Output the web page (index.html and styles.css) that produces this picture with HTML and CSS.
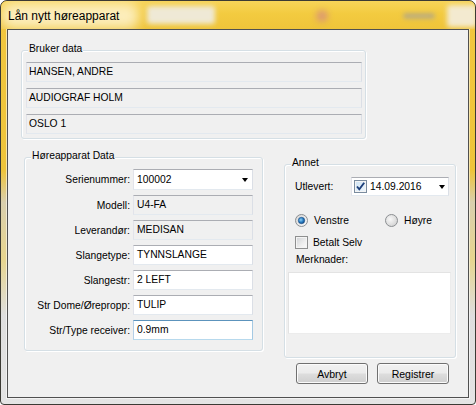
FILE: index.html
```
<!DOCTYPE html>
<html>
<head>
<meta charset="utf-8">
<link rel="stylesheet" href="styles.css">
</head>
<body>
<div class="window">
  <div class="titlebar">
    <span class="glow"></span>
    <span class="bg-blob blob-box"></span>
    <span class="bg-blob blob-red"></span>
    <span class="bg-blob blob-text"></span>
    <span class="bg-blob blob-white"></span>
    <span class="title">Lån nytt høreapparat</span>
  </div>
  <div class="client">
    <div class="group bruker">
      <span class="legend">Bruker data</span>
      <div class="tb ro wide">HANSEN, ANDRE</div>
      <div class="tb ro wide">AUDIOGRAF HOLM</div>
      <div class="tb ro wide">OSLO 1</div>
    </div>
    <div class="lower">
      <div class="group hore">
        <span class="legend">Høreapparat Data</span>
        <div class="form">
          <span class="lbl">Serienummer:</span>
          <div class="tb combo">100002<span class="arrow"></span></div>
          <span class="lbl">Modell:</span>
          <div class="tb ro">U4-FA</div>
          <span class="lbl">Leverandør:</span>
          <div class="tb ro">MEDISAN</div>
          <span class="lbl">Slangetype:</span>
          <div class="tb">TYNNSLANGE</div>
          <span class="lbl">Slangestr:</span>
          <div class="tb">2 LEFT</div>
          <span class="lbl">Str Dome/Ørepropp:</span>
          <div class="tb">TULIP</div>
          <span class="lbl">Str/Type receiver:</span>
          <div class="tb focus">0.9mm</div>
        </div>
      </div>
      <div class="right">
        <div class="group annet">
          <span class="legend">Annet</span>
          <div class="date-row">
            <span class="date-lbl">Utlevert:</span>
            <div class="tb date">
              <span class="chk checked"><svg width="11" height="11" viewBox="0 0 11 11"><path d="M2 5.5 L4.3 8.3 L9.2 1.8" fill="none" stroke="#1d3f7a" stroke-width="1.9"/></svg></span>
              <span class="date-text">14.09.2016</span>
              <span class="arrow"></span>
            </div>
          </div>
          <div class="radio-row">
            <span class="opt venstre"><svg class="radio" width="13" height="13" viewBox="0 0 13 13"><defs><radialGradient id="rg" cx="0.4" cy="0.4" r="0.6"><stop offset="0" stop-color="#8fd0f5"/><stop offset="0.6" stop-color="#2a7fc4"/><stop offset="1" stop-color="#124e8c"/></radialGradient><linearGradient id="ring" x1="0" y1="0" x2="1" y2="1"><stop offset="0" stop-color="#d4d4d4"/><stop offset="1" stop-color="#fbfbfb"/></linearGradient></defs><circle cx="6.5" cy="6.5" r="6" fill="url(#ring)" stroke="#8c8f92"/><circle cx="6.5" cy="6.5" r="3.2" fill="url(#rg)" stroke="#1c4e85" stroke-width="0.6"/></svg>Venstre</span>
            <span class="opt"><svg class="radio" width="13" height="13" viewBox="0 0 13 13"><defs><radialGradient id="rg2" cx="0.4" cy="0.4" r="0.7"><stop offset="0" stop-color="#f8f8f8"/><stop offset="1" stop-color="#cfcfcf"/></radialGradient></defs><circle cx="6.5" cy="6.5" r="6" fill="url(#rg2)" stroke="#8c8f92"/></svg>Høyre</span>
          </div>
          <div class="check-row"><span class="chk"></span>Betalt Selv</div>
          <div class="merk-lbl">Merknader:</div>
          <div class="memo"></div>
        </div>
        <div class="buttons">
          <button class="btn">Avbryt</button>
          <button class="btn">Registrer</button>
        </div>
      </div>
    </div>
  </div>
</div>
</body>
</html>
```
FILE: styles.css
```
* { box-sizing: border-box; }
html, body { margin: 0; padding: 0; background: #ffffff; }
body {
  font-family: "Liberation Sans", Arial, sans-serif;
  font-size: 10.3px;
  color: #000;
}
.window {
  width: 476px;
  height: 405px;
  border: 1px solid #3b3a34;
  border-radius: 7px 7px 4px 4px;
  padding: 0 6px 6px 6px;
  background: linear-gradient(180deg, #f2c73f 0%, #eec43a 42%, #d9cfae 50%, #e7d58e 64%, #dedede 78%, #e4e4e4 100%);
  overflow: hidden;
}
.titlebar {
  position: relative;
  height: 28px;
  margin: 0 -6px;
  padding-left: 7px;
  display: flex;
  align-items: center;
  background: linear-gradient(180deg, #f7d459 0%, #f3cb40 45%, #efc43a 100%);
  border-radius: 6px 6px 0 0;
  overflow: hidden;
}
.title {
  position: relative;
  font-size: 12px;
  color: #000;
  margin-top: 2px;
}
.glow {
  position: absolute;
  left: 0; top: 2px;
  width: 138px; height: 26px;
  background: rgba(255, 250, 230, 0.75);
  filter: blur(6px);
  border-radius: 10px;
}
.bg-blob { position: absolute; filter: blur(2.5px); border-radius: 3px; }
.blob-box { left: 146px; top: 5px; width: 68px; height: 18px; background: #efe9d6; }
.blob-red { left: 315px; top: 9px; width: 12px; height: 12px; background: #dc9a70; border-radius: 50%; filter: blur(3px); }
.blob-text { left: 402px; top: 12px; width: 32px; height: 6px; background: #bfae78; filter: blur(2px); }
.blob-white { left: 446px; top: 4px; width: 30px; height: 22px; background: #f3ead0; }

.client {
  height: 369px;
  background: #f0f0f0;
  border: 1px solid #505050;
  box-shadow: 0 0 0 1px rgba(255,255,255,0.55);
}
.group {
  position: relative;
  border: 1px solid #d5dfe5;
  border-radius: 3px;
  box-shadow: inset 1px 1px 0 #fff, 1px 1px 0 #fff;
}
.legend {
  position: absolute;
  top: -8px;
  left: 6px;
  padding: 0 1px;
  line-height: 12px;
  background: #f0f0f0;
  white-space: nowrap;
}
.bruker {
  margin: 20px 0 0 13px;
  width: 345px;
  height: 89px;
  padding: 11px 0 0 4px;
  display: flex;
  flex-direction: column;
  gap: 6px;
}
.tb {
  height: 20px;
  border: 1px solid;
  border-color: #abadb3 #dbdfe6 #e3e9ef #e2e3ea;
  background: #fff;
  padding-left: 3px;
  line-height: 18px;
  white-space: nowrap;
}
.tb.ro { background: #f0f0f0; }
.wide { width: 336px; padding-left: 2px; }
.tb.focus { border-color: #5c93bc #a4c9e3 #b7d9ed #b5cfe7; }

.lower {
  display: flex;
  align-items: flex-start;
  margin-top: 18px;
}
.hore {
  margin-left: 16px;
  width: 239px;
  height: 194px;
  padding-top: 11px;
}
.form {
  display: grid;
  grid-template-columns: 105px 120px;
  grid-template-rows: 21px;
  grid-auto-rows: 20px;
  column-gap: 3px;
  row-gap: 5px;
}
.lbl {
  text-align: right;
  align-self: center;
  white-space: nowrap;
}
.combo {
  height: 21px;
  line-height: 19px;
  display: flex;
  justify-content: space-between;
  align-items: center;
}
.arrow {
  width: 0; height: 0;
  border-top: 4px solid #000;
  border-left: 3.5px solid transparent;
  border-right: 3.5px solid transparent;
  margin-right: 4px;
}
.right {
  margin-left: 21px;
  margin-top: 7px;
  width: 172px;
}
.annet {
  width: 172px;
  height: 194px;
  padding-top: 12px;
}
.date-row {
  display: flex;
  align-items: center;
  padding-left: 10px;
}
.date-lbl { width: 56px; }
.tb.date {
  width: 98px;
  height: 19px;
  display: flex;
  align-items: center;
  padding-left: 2px;
}
.date-text { margin-left: 3px; flex: 1; }
.date .arrow { margin-right: 3px; }
.chk {
  display: inline-flex;
  align-items: center;
  justify-content: center;
  width: 13px; height: 13px;
  border: 1px solid #8e8f8f;
  background: linear-gradient(135deg, #cfd1d4 0%, #eeeeee 60%, #fbfbfb 100%);
  box-shadow: inset 0 0 0 1px #f4f4f4;
  flex: none;
}
.chk.checked {
  border-color: #7a8c9f;
  background: linear-gradient(135deg, #cfe3f4 0%, #eef6fc 100%);
}
.radio-row {
  display: flex;
  align-items: center;
  margin-top: 18px;
  padding-left: 10px;
  height: 13px;
}
.opt {
  display: flex;
  align-items: center;
  gap: 6px;
}
.venstre { width: 90px; }
.radio { flex: none; }
.check-row {
  display: flex;
  align-items: center;
  gap: 5px;
  margin-top: 9px;
  padding-left: 10px;
  height: 13px;
}
.merk-lbl {
  margin-top: 5px;
  padding-left: 11px;
  line-height: 12px;
}
.memo {
  margin: 6px 0 0 3px;
  width: 163px;
  height: 62px;
  background: #fff;
  border: 1px solid;
  border-color: #e3e3e3 #ececec #ececec #e3e3e3;
}
.buttons {
  display: flex;
  gap: 9px;
  margin-top: 5px;
  padding-left: 12px;
}
.btn {
  width: 72px;
  height: 21px;
  padding: 0;
  font-family: "Liberation Sans", Arial, sans-serif;
  font-size: 10.5px;
  color: #000;
  border: 1px solid #707070;
  border-radius: 3px;
  background: linear-gradient(180deg, #f2f2f2 0%, #ebebeb 48%, #dddddd 52%, #cfcfcf 100%);
  box-shadow: inset 0 0 0 1px #fbfbfb;
}
```
